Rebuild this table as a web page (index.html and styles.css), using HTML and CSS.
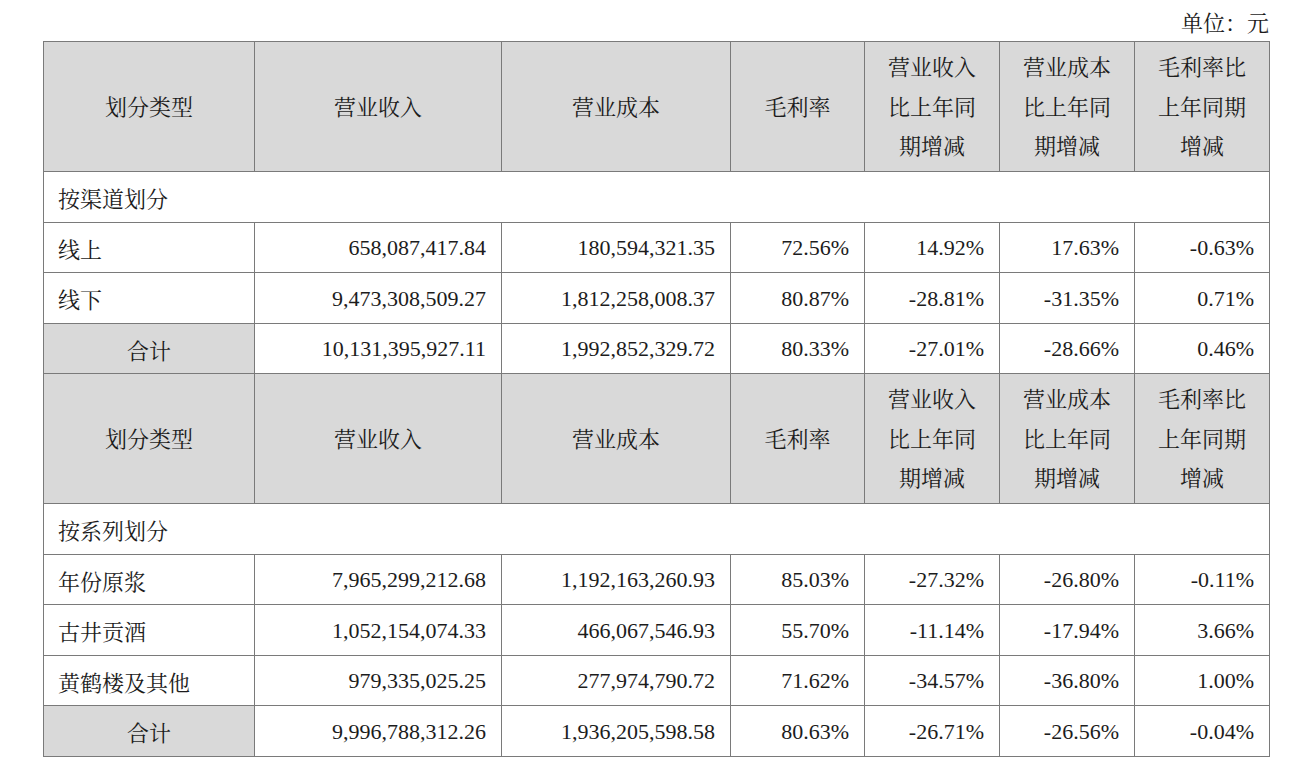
FILE: index.html
```html
<!DOCTYPE html>
<html lang="zh-CN">
<head>
<meta charset="utf-8">
<title>营业收入构成</title>
<link rel="stylesheet" href="styles.css">
</head>
<body>
<div class="wrap">
  <div class="unit">单位：元</div>
  <table class="report">
    <colgroup>
      <col class="c1"><col class="c2"><col class="c3"><col class="c4"><col class="c5"><col class="c6"><col class="c7">
    </colgroup>
    <tbody>
      <tr class="head">
        <td>划分类型</td><td>营业收入</td><td>营业成本</td><td>毛利率</td>
        <td>营业收入<br>比上年同<br>期增减</td><td>营业成本<br>比上年同<br>期增减</td><td>毛利率比<br>上年同期<br>增减</td>
      </tr>
      <tr class="sec"><td colspan="7">按渠道划分</td></tr>
      <tr class="row"><td class="name">线上</td><td>658,087,417.84</td><td>180,594,321.35</td><td>72.56%</td><td>14.92%</td><td>17.63%</td><td>-0.63%</td></tr>
      <tr class="row"><td class="name">线下</td><td>9,473,308,509.27</td><td>1,812,258,008.37</td><td>80.87%</td><td>-28.81%</td><td>-31.35%</td><td>0.71%</td></tr>
      <tr class="row"><td class="total">合计</td><td>10,131,395,927.11</td><td>1,992,852,329.72</td><td>80.33%</td><td>-27.01%</td><td>-28.66%</td><td>0.46%</td></tr>
      <tr class="head">
        <td>划分类型</td><td>营业收入</td><td>营业成本</td><td>毛利率</td>
        <td>营业收入<br>比上年同<br>期增减</td><td>营业成本<br>比上年同<br>期增减</td><td>毛利率比<br>上年同期<br>增减</td>
      </tr>
      <tr class="sec"><td colspan="7">按系列划分</td></tr>
      <tr class="row"><td class="name">年份原浆</td><td>7,965,299,212.68</td><td>1,192,163,260.93</td><td>85.03%</td><td>-27.32%</td><td>-26.80%</td><td>-0.11%</td></tr>
      <tr class="row"><td class="name">古井贡酒</td><td>1,052,154,074.33</td><td>466,067,546.93</td><td>55.70%</td><td>-11.14%</td><td>-17.94%</td><td>3.66%</td></tr>
      <tr class="row"><td class="name">黄鹤楼及其他</td><td>979,335,025.25</td><td>277,974,790.72</td><td>71.62%</td><td>-34.57%</td><td>-36.80%</td><td>1.00%</td></tr>
      <tr class="row"><td class="total">合计</td><td>9,996,788,312.26</td><td>1,936,205,598.58</td><td>80.63%</td><td>-26.71%</td><td>-26.56%</td><td>-0.04%</td></tr>
    </tbody>
  </table>
</div>
</body>
</html>
```
FILE: styles.css
```css
html, body {
  margin: 0;
  padding: 0;
  background: #ffffff;
}
body {
  font-family: "Liberation Serif", "Noto Serif CJK SC", "Noto Sans CJK SC", serif;
  font-size: 22px;
  color: #1c1c1c;
}
.wrap {
  width: 1227px;
  padding-left: 43px;
}
.unit {
  height: 41px;
  line-height: 47px;
  text-align: right;
  padding-right: 1px;
}
.report {
  width: 1227px;
  border-collapse: collapse;
  table-layout: fixed;
}
.c1 { width: 211px; }
.c2 { width: 247px; }
.c3 { width: 229px; }
.c4 { width: 134px; }
.c5 { width: 135px; }
.c6 { width: 135px; }
.c7 { width: 135px; }
.report td {
  border: 1px solid #7a7a7a;
  padding: 0 14px 0 14px;
  vertical-align: middle;
  white-space: nowrap;
}
.head td {
  height: 127px;
  background: #d9d9d9;
  text-align: center;
  line-height: 39.5px;
  padding: 2px 0 0 0;
}
.sec td {
  height: 47.5px;
  text-align: left;
  padding-top: 2px;
}
.row td {
  height: 47.5px;
  text-align: right;
  padding-top: 2px;
  padding-right: 15px;
}
.row td.name {
  text-align: left;
}
.row td.total {
  text-align: center;
  background: #d9d9d9;
  padding: 2px 0 0 0;
}
```
